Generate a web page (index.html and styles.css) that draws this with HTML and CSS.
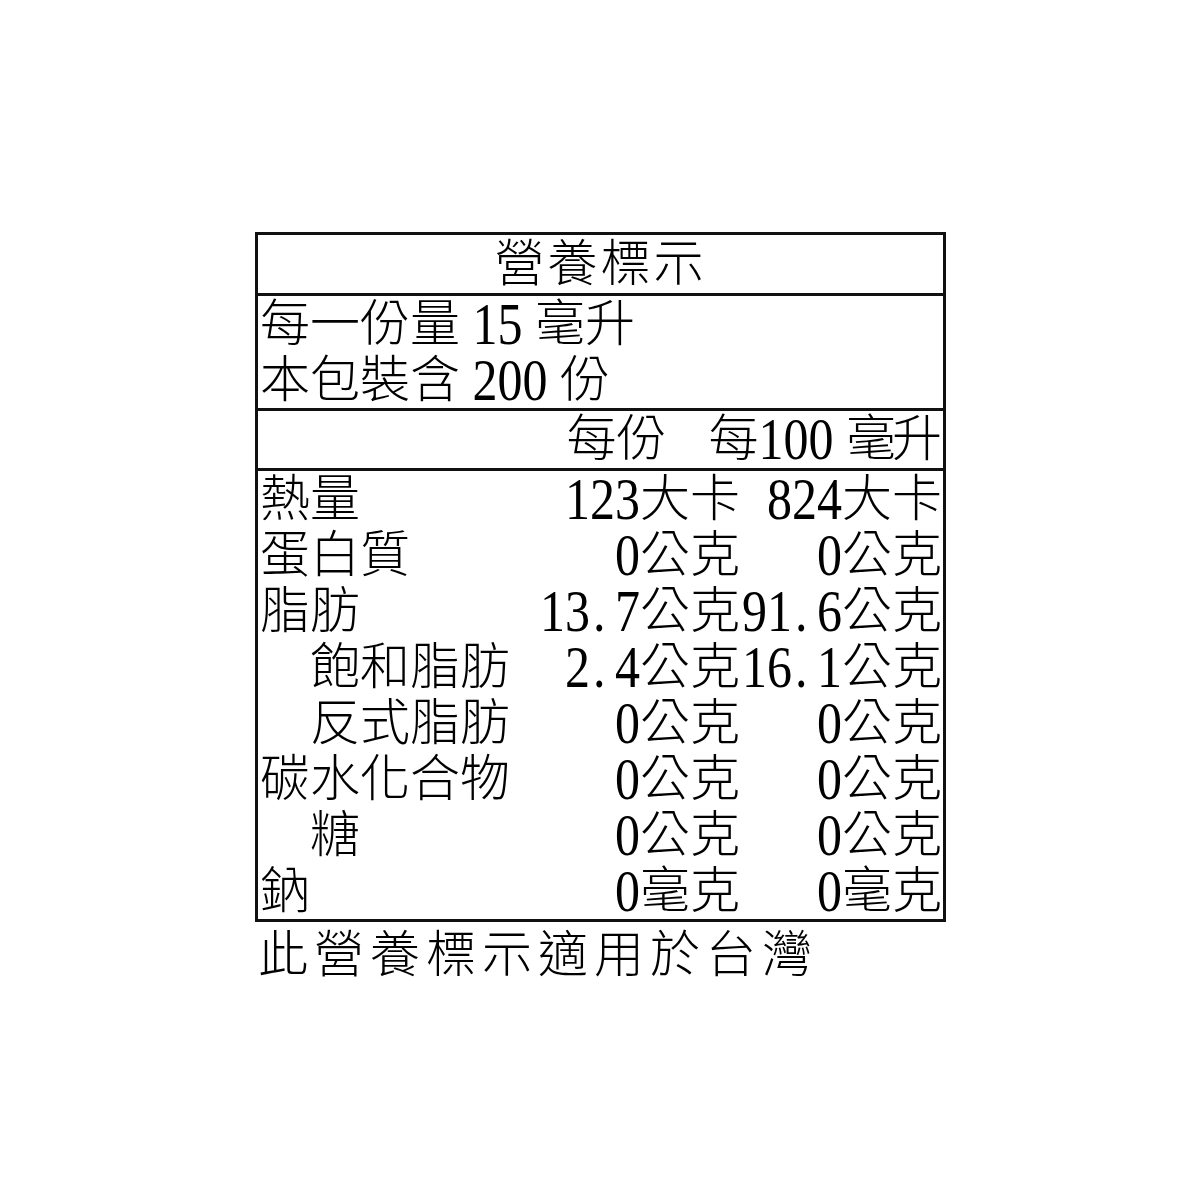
FILE: index.html
```html
<!DOCTYPE html>
<html lang="zh-Hant">
<head>
<meta charset="utf-8">
<title>營養標示</title>
<link rel="stylesheet" href="styles.css">
</head>
<body>
<div class="page">
  <div class="label">
    <div class="title">營養標示</div>
    <div class="serving">
      <div class="line">每一份量 <span class="num">15</span> 毫升</div>
      <div class="line">本包裝含 <span class="num">200</span> 份</div>
    </div>
    <div class="head">
      <div class="h1">每份</div>
      <div class="h2">每<span class="num">100</span> <span class="unit">毫升</span></div>
    </div>
    <div class="grid body">
      <div class="name">熱量</div>
      <div class="v1"><span class="num">123</span>大卡</div>
      <div class="v2"><span class="num">824</span>大卡</div>

      <div class="name">蛋白質</div>
      <div class="v1"><span class="num">0</span>公克</div>
      <div class="v2"><span class="num">0</span>公克</div>

      <div class="name">脂肪</div>
      <div class="v1"><span class="num">13<span class="dot">.</span>7</span>公克</div>
      <div class="v2"><span class="num">91<span class="dot">.</span>6</span>公克</div>

      <div class="name sub">飽和脂肪</div>
      <div class="v1"><span class="num">2<span class="dot">.</span>4</span>公克</div>
      <div class="v2"><span class="num">16<span class="dot">.</span>1</span>公克</div>

      <div class="name sub">反式脂肪</div>
      <div class="v1"><span class="num">0</span>公克</div>
      <div class="v2"><span class="num">0</span>公克</div>

      <div class="name">碳水化合物</div>
      <div class="v1"><span class="num">0</span>公克</div>
      <div class="v2"><span class="num">0</span>公克</div>

      <div class="name sub">糖</div>
      <div class="v1"><span class="num">0</span>公克</div>
      <div class="v2"><span class="num">0</span>公克</div>

      <div class="name">鈉</div>
      <div class="v1"><span class="num">0</span>毫克</div>
      <div class="v2"><span class="num">0</span>毫克</div>
    </div>
  </div>
  <div class="footer">此營養標示適用於台灣</div>
</div>
</body>
</html>
```

FILE: styles.css
```css
html, body {
  margin: 0;
  padding: 0;
  background: #fff;
}

body {
  font-family: "Liberation Serif", "Noto Sans CJK TC", serif;
  font-size: 50px;
  font-weight: 300;
  line-height: 56px;
  color: #000;
}

.page {
  padding: 232px 0 0 255px;
}

.label {
  width: 691px;
  box-sizing: border-box;
  border: 3px solid #111;
}

.title {
  height: 58px;
  line-height: 58px;
  text-align: center;
  letter-spacing: 3px;
  border-bottom: 3px solid #111;
}

.serving {
  padding-left: 2px;
  border-bottom: 3px solid #111;
}

.line {
  height: 56px;
  white-space: nowrap;
}

.head {
  display: flex;
  justify-content: flex-end;
  height: 57px;
  border-bottom: 3px solid #111;
  white-space: nowrap;
}

.h1 {
  margin-right: 42px;
}

.h2 {
  padding-right: 5px;
}

.unit {
  letter-spacing: -4px;
}

.grid {
  display: grid;
  grid-template-columns: 1fr 230px 203px;
}

.grid > div {
  height: 56px;
  white-space: nowrap;
}

.name {
  padding-left: 2px;
}

.name.sub {
  padding-left: 52px;
}

.v1,
.v2 {
  text-align: right;
}

.v2 {
  padding-right: 1px;
}

.num {
  display: inline-block;
  transform: scaleY(1.2);
}

.dot {
  display: inline-block;
  width: 0.5em;
  text-align: left;
  padding-left: 3px;
  box-sizing: border-box;
}

.footer {
  height: 56px;
  margin-top: 5px;
  padding-left: 3px;
  letter-spacing: 6px;
  white-space: nowrap;
}
```
